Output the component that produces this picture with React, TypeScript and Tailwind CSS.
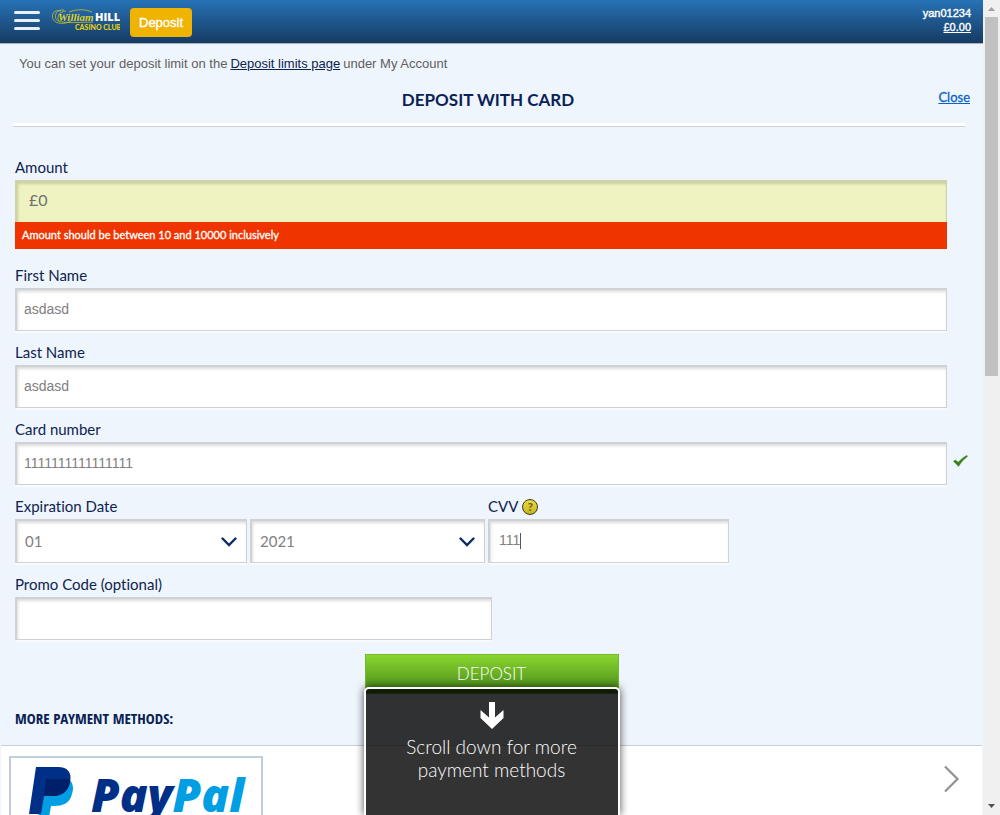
import React from "react";

const FIELD =
  "block w-full border border-t-2 border-l-2 border-[#cfd2d5] bg-white text-[#808080] shadow-[inset_1px_2px_3px_rgba(0,0,0,0.14),0_2px_0_rgba(255,255,255,0.6)] outline-none";
const INPUT_TEXT = "font-['Liberation_Sans',sans-serif] text-sm";
const LABEL = "flex h-6 items-center pb-0.5 text-[15px] text-[#0e2350]";

function TextField({ id, label, value, valid }: { id: string; label: string; value: string; valid?: boolean }) {
  return (
    <div className="mb-2.5">
      <label htmlFor={id} className={LABEL}>{label}</label>
      <div className="-mr-9 flex items-center">
        <input id={id} defaultValue={value} className={`${FIELD} ${INPUT_TEXT} h-[43px] min-w-0 flex-1 px-[7px] pb-0.5`} />
        <span className="w-9 pl-1.5">
          {valid && (
            <svg width="15" height="12" viewBox="0 0 15 12" aria-label="Valid" className="-mt-1.5">
              <path d="M0.5 6.2 L2.4 5 L5.2 7.3 C8 4 10.5 2.2 14 0.4 L14.4 1.6 C10.5 4.4 8 7.4 5.6 11.4 Z" fill="#37801b" stroke="#37801b" strokeWidth="0.5" />
            </svg>
          )}
        </span>
      </div>
    </div>
  );
}

function SelectField({ id, name, options }: { id: string; name?: string; options: string[] }) {
  return (
    <div className="relative">
      <select id={id} aria-label={name} className={`${FIELD} h-11 appearance-none px-2 text-[15px]`}>
        {options.map((o) => (
          <option key={o} className="text-[#606060]">{o}</option>
        ))}
      </select>
      <svg width="16" height="10" viewBox="0 0 16 10" className="pointer-events-none absolute right-2.5 top-[18px]">
        <path d="M1.5 1.5 L8 8 L14.5 1.5" fill="none" stroke="#0c2a63" strokeWidth="2.4" strokeLinecap="round" />
      </svg>
    </div>
  );
}

function Logo() {
  return (
    <svg width="68" height="24" viewBox="0 0 68 24" role="img" aria-label="William Hill Casino Club">
      <g fill="none" stroke="#c9bf38" strokeWidth="0.8">
        <path d="M9 2 C2 0 -1 6 1 10 C4 16 14 15 19 12" />
        <path d="M12 1 C5 0 2 6 4 10 C6 14 16 14 41 13" />
        <path d="M14 2 C8 2 4 8 7 12" />
        <path d="M17 3 C25 0 33 0 40 3" />
      </g>
      <text x="6" y="12" fontFamily="Liberation Serif, serif" fontStyle="italic" fontWeight="700" fontSize="11" fill="#ddd02c">William</text>
      <text x="43" y="12" fontFamily="Open Sans, sans-serif" fontWeight="800" fontSize="11" fill="#fff">HILL</text>
      <text x="23" y="21" fontFamily="Lato, sans-serif" fontWeight="900" fontSize="7" fill="#e6cf12">CASINO CLUB</text>
    </svg>
  );
}

function Header() {
  return (
    <header className="flex h-11 shrink-0 items-center border-b border-[#a9b2bb] bg-linear-to-b from-[#2773b7] to-[#163b63] pl-3.5 pr-3 text-white">
      <button aria-label="Menu" className="flex w-[26px] flex-col gap-[5px] pb-0.5">
        <span className="h-[3px] rounded bg-white/90" />
        <span className="h-[3px] rounded bg-white/90" />
        <span className="h-[3px] rounded bg-white/90" />
      </button>
      <a href="#home" className="ml-3 pb-0.5"><Logo /></a>
      <button className="ml-2.5 mt-0.5 h-[29px] rounded bg-[#efb300] px-[9px] font-['Liberation_Sans',sans-serif] text-[13px] [-webkit-text-stroke:0.4px_white]">
        Deposit
      </button>
      <div className="ml-auto pb-1 text-right font-['Liberation_Sans',sans-serif] text-[11px] leading-[14px] [-webkit-text-stroke:0.4px_white]">
        <div>yan01234</div>
        <a href="#balance" className="underline">£0.00</a>
      </div>
    </header>
  );
}

function Scrollbar() {
  return (
    <div aria-hidden="true" className="flex w-[17px] shrink-0 flex-col items-center bg-[#f0f0f0]">
      <svg width="17" height="17" viewBox="0 0 17 17"><path d="M5 11 L8.5 7 L12 11 Z" fill="#a0a0a0" /></svg>
      <div className="h-[44%] w-[13px] bg-[#c1c1c1]" />
      <svg width="17" height="17" viewBox="0 0 17 17" className="mt-auto"><path d="M5 6 L8.5 10 L12 6 Z" fill="#505050" /></svg>
    </div>
  );
}

function PayPal() {
  return (
    <a href="#paypal" aria-label="PayPal" className="block h-28 w-[254px] border-2 border-[#c0cede] bg-white">
      <svg width="250" height="108" viewBox="0 0 250 108">
        <path d="M34 21 H58 C62 25 63 30 61 36 C59 45 52 48 43 48 H40 L36 70 H25 Z" fill="#009ee3" />
        <path d="M25 9 H47 C57 9 61 15 59 24 C57 34 50 38 40 38 H33 L30 56 H18 Z" fill="#002f87" />
        <path d="M35 21 H59 C59 32 52 38 42 38 H33 Z" fill="#001f6b" />
        <text x="80" y="54" fontFamily="Open Sans, sans-serif" fontStyle="italic" fontWeight="800" fontSize="46">
          <tspan fill="#002f87">Pay</tspan>
          <tspan fill="#009ee3">Pal</tspan>
        </text>
      </svg>
    </a>
  );
}

export default function App() {
  return (
    <div className="flex h-screen overflow-hidden bg-[#eef5fc] font-['Lato',sans-serif] [font-variant-ligatures:none]">
      <div className="relative flex min-w-0 flex-1 flex-col overflow-hidden">
        <Header />
        <p className="flex h-10 shrink-0 items-center gap-[3px] pl-[19px] font-['Liberation_Sans',sans-serif] text-[13px] text-[#5e5e5e]">
          You can set your deposit limit on the
          <a href="#limits" className="text-[#0c2350] underline">Deposit limits page</a>
          under My Account
        </p>
        <div className="grid h-8 shrink-0 grid-cols-[1fr_auto_1fr] items-center pl-1.5 pr-[13px]">
          <h1 className="col-start-2 text-[17px] font-bold text-[#0a1f55]">DEPOSIT WITH CARD</h1>
          <a href="#close" className="justify-self-end pb-1 text-[13px] text-[#0b62c4] underline [-webkit-text-stroke:0.3px_#0b62c4]">Close</a>
        </div>
        <hr className="ml-[13px] mr-[18px] mt-[7px] h-1 shrink-0 border-0 border-b border-[#ccd5dd] bg-white" />

        <form className="shrink-0 pl-[15px] pr-9 pt-[29px]" onSubmit={(e) => e.preventDefault()}>
          <div className="mb-[15px]">
            <label htmlFor="amount" className={LABEL}>Amount</label>
            <input
              id="amount"
              defaultValue="£0"
              aria-invalid="true"
              aria-describedby="amount-error"
              className="block h-[42px] w-full border-l-2 border-r border-t-2 border-[#cfd3a8] bg-[#eff3c1] px-3 pb-1.5 text-base text-[#707070] shadow-[inset_1px_2px_3px_rgba(0,0,0,0.16)] outline-none"
            />
            <p id="amount-error" className="flex h-[27px] items-center bg-[#f03400] px-[7px] text-[11px] text-white [-webkit-text-stroke:0.3px_white]">
              Amount should be between 10 and 10000 inclusively
            </p>
          </div>
          <TextField id="first" label="First Name" value="asdasd" />
          <TextField id="last" label="Last Name" value="asdasd" />
          <TextField id="card" label="Card number" value="1111111111111111" valid />
          <div className="mb-2.5 grid grid-cols-[232fr_235fr_241fr_215fr] items-end gap-[3px]">
            <div>
              <label htmlFor="month" className={LABEL}>Expiration Date</label>
              <SelectField id="month" options={["01", "02", "03", "04", "05", "06"]} />
            </div>
            <SelectField id="year" name="Expiration year" options={["2021", "2022", "2023"]} />
            <div>
              <div className="flex h-6 items-center gap-1">
                <label htmlFor="cvv" className={LABEL}>CVV</label>
                <button type="button" aria-label="What is CVV?" className="flex size-4 items-center justify-center rounded-full border border-[#3b3a25] bg-linear-to-b from-[#eadb3c] to-[#c7b51c] text-xs font-bold leading-none text-[#655c1c]">
                  ?
                </button>
              </div>
              <div className="relative">
                <input id="cvv" defaultValue="111" className={`${FIELD} ${INPUT_TEXT} h-11 px-[9px] pb-1`} />
                <span aria-hidden="true" className="absolute left-8 top-3.5 h-4 w-px bg-[#555555]" />
              </div>
            </div>
          </div>
          <label htmlFor="promo" className={LABEL}>Promo Code (optional)</label>
          <input id="promo" className={`${FIELD} ${INPUT_TEXT} h-[43px] max-w-[477px] px-2`} />
        </form>

        <button className="mt-3.5 h-10 w-[254px] shrink-0 self-center border border-[#78b72c] bg-linear-to-b from-[#8ad62e] to-[#488a1b] text-[17px] font-light text-white">
          DEPOSIT
        </button>
        <h2 className="mt-3 h-6 shrink-0 pl-[15px] font-['Liberation_Sans_Narrow','Open_Sans_Condensed','Liberation_Sans',sans-serif] text-[15px] font-bold leading-6 text-[#0a1f55]">
          MORE PAYMENT METHODS:
        </h2>
        <section className="mx-px mt-[15px] flex shrink-0 items-start justify-between border-t border-[#c9ced3] bg-white pb-10 pl-2 pr-[22px] pt-2.5">
          <PayPal />
          <svg width="17" height="28" viewBox="0 0 17 28" className="mt-[9px]">
            <path d="M2 1.5 L14.5 14 L2 26.5" fill="none" stroke="#929292" strokeWidth="2.2" />
          </svg>
        </section>

        <div className="absolute inset-x-0 bottom-0 flex justify-center">
          <div className="flex h-32 w-64 flex-col items-center rounded-t-[5px] border-2 border-b-0 border-white bg-black/80 pt-3 text-center text-[19px] font-light leading-[23px] text-white shadow-[0_0_8px_rgba(0,0,0,0.7)]">
            <svg width="24" height="28" viewBox="0 0 24 28" className="mb-1.5 shrink-0">
              <path d="M9 1 H15 V16.5 L23.5 9 V17 L12 28 L0.5 17 V9 L9 16.5 Z" fill="#fff" />
            </svg>
            <p>Scroll down for more<br />payment methods</p>
          </div>
        </div>
      </div>
      <Scrollbar />
    </div>
  );
}
